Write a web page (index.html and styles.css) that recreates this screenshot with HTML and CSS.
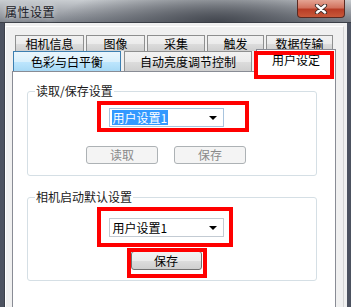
FILE: index.html
```html
<!DOCTYPE html>
<html lang="zh-CN">
<head>
    <meta charset="UTF-8">
    <title>属性设置</title>
    <link rel="stylesheet" href="styles.css">
</head>
<body>
    <div class="window">
        <div class="titlebar">
            <span class="title">属性设置</span>
            <div class="close-btn">
                <svg width="14" height="10" viewBox="0 0 14 10">
                    <path d="M3 1.5 L11 8.5 M11 1.5 L3 8.5" stroke="#3a2a28" stroke-width="4.2" stroke-linecap="round"/>
                    <path d="M3 1.5 L11 8.5 M11 1.5 L3 8.5" stroke="#ffffff" stroke-width="2.4" stroke-linecap="round"/>
                </svg>
            </div>
        </div>

        <div class="frame">
            <div class="client">
                <div class="inner">
                    <div class="tab-row row-top">
                        <div class="tab" style="width: 69px;">相机信息</div>
                        <div class="tab" style="width: 59px;">图像</div>
                        <div class="tab" style="width: 58px;">采集</div>
                        <div class="tab" style="width: 57px;">触发</div>
                        <div class="tab" style="width: 67px;">数据传输</div>
                    </div>
                    <div class="tab-row row-bottom">
                        <div class="tab tab-hover" style="width: 108px;">色彩与白平衡</div>
                        <div class="tab" style="width: 128px;">自动亮度调节控制</div>
                        <div class="tab tab-active" style="width: 80px;">用户设定</div>
                    </div>

                    <div class="panel">
                        <div class="group group-load">
                            <span class="group-label">读取/保存设置</span>
                            <div class="combo combo-focus">
                                <span class="combo-text selected">用户设置1</span>
                                <span class="combo-arrow"></span>
                            </div>
                            <div class="btn-row">
                                <div class="btn btn-disabled">读取</div>
                                <div class="btn btn-disabled">保存</div>
                            </div>
                        </div>

                        <div class="group group-default">
                            <span class="group-label">相机启动默认设置</span>
                            <div class="combo">
                                <span class="combo-text">用户设置1</span>
                                <span class="combo-arrow"></span>
                            </div>
                            <div class="btn btn-save">保存</div>
                        </div>
                    </div>
                </div>
            </div>
        </div>

        <!-- annotation boxes -->
        <div class="mark mark-tab"></div>
        <div class="mark mark-combo1"></div>
        <div class="mark mark-combo2"></div>
        <div class="mark mark-save"></div>
    </div>
</body>
</html>
```

FILE: styles.css
```css
* {
    margin: 0;
    padding: 0;
    box-sizing: border-box;
}

body {
    width: 351px;
    height: 307px;
    overflow: hidden;
    background: #4c5260;
    font-family: "Noto Sans CJK SC", "Noto Sans", sans-serif;
    font-size: 12px;
    color: #000000;
}

.window {
    position: relative;
    width: 351px;
    height: 307px;
}

/* title bar */
.titlebar {
    height: 23px;
    display: flex;
    align-items: flex-start;
    justify-content: space-between;
    background:
        radial-gradient(ellipse 160px 40px at 62% 100%, rgba(60, 64, 72, 0.9), rgba(60, 64, 72, 0) 100%),
        linear-gradient(to bottom, #c9cdd1 0%, #a9adb3 45%, #80858d 100%);
    border-bottom: 1px solid #3a3e46;
}

.title {
    margin: 5px 0 0 5px;
    font-size: 12px;
    line-height: 14px;
    letter-spacing: 0.5px;
    color: #1c1c28;
    text-shadow: 0 0 6px rgba(255, 255, 255, 0.8);
}

.close-btn {
    width: 48px;
    height: 18px;
    margin-right: 6px;
    display: flex;
    align-items: center;
    justify-content: center;
    border: 1px solid #5a2a22;
    border-top: none;
    border-radius: 0 0 4px 4px;
    background: linear-gradient(to bottom, #e4a493 0%, #d2735f 45%, #b83d26 55%, #c8583a 100%);
}

/* frame */
.frame {
    height: 284px;
    padding: 0 4px 0 4px;
    background: #4c5260;
}

.client {
    height: 100%;
    background: #f0f0f0;
    padding-top: 3px;
    border-left: 1px solid #3c404a;
}

.inner {
    height: 100%;
    margin-right: 3px;
    border-top: 1px solid #ffffff;
    border-left: 1px solid #ffffff;
    border-right: 1px solid #d4d4d4;
    padding-top: 8px;
}

/* tabs */
.tab-row {
    display: flex;
}

.row-top {
    gap: 2px;
    padding-left: 9px;
    height: 16px;
}

.row-bottom {
    gap: 3px;
    padding-left: 7px;
    height: 20px;
    align-items: flex-end;
}

.tab {
    height: 100%;
    display: flex;
    align-items: center;
    justify-content: center;
    border: 1px solid #8e8f8f;
    border-bottom: none;
    background: linear-gradient(to bottom, #f2f2f2 0%, #ebebeb 50%, #dddddd 51%, #cfcfcf 100%);
    line-height: 14px;
    white-space: nowrap;
}

.row-top .tab {
    padding-top: 1px;
}

.tab-hover {
    border-color: #3c7fb1;
    background: linear-gradient(to bottom, #eaf6fd 0%, #d9f0fc 50%, #bee6fd 51%, #a7d9f5 100%);
}

.tab-active {
    position: relative;
    z-index: 2;
    height: 23px;
    margin-bottom: -1px;
    margin-left: 1px;
    background: #ffffff;
    border-color: #898c95;
    padding-bottom: 2px;
}

.panel {
    position: relative;
    margin-left: 6px;
    width: 324px;
    height: 240px;
    background: #ffffff;
    border: 1px solid #898c95;
    padding: 19px 0 0 14px;
}

/* group boxes */
.group {
    position: relative;
    width: 290px;
    border: 1px solid #d5dfe5;
    border-radius: 3px;
    display: flex;
    flex-direction: column;
    align-items: center;
    padding-right: 12px;
}

.group-load {
    padding-top: 16px;
    padding-bottom: 11px;
}

.group-default {
    margin-top: 21px;
    padding-top: 20px;
    padding-bottom: 10px;
}

.group-label {
    position: absolute;
    top: -8px;
    left: 7px;
    padding: 0 1px;
    background: #ffffff;
    line-height: 14px;
    color: #1a1a1a;
}

/* combo box */
.combo {
    width: 115px;
    height: 19px;
    display: flex;
    align-items: center;
    justify-content: space-between;
    border: 1px solid #c3cbd3;
    padding: 0 6px 0 2px;
    background: #ffffff;
}

.combo-focus {
    border-color: #a8c4de;
}

.combo-text {
    line-height: 15px;
    padding: 0 1px;
}

.combo-text.selected {
    background: #3399ff;
    color: #ffffff;
}

.combo-arrow {
    width: 0;
    height: 0;
    border-left: 4px solid transparent;
    border-right: 4px solid transparent;
    border-top: 4px solid #000000;
}

/* buttons */
.btn-row {
    display: flex;
    gap: 16px;
    margin-top: 19px;
}

.btn {
    display: flex;
    align-items: center;
    justify-content: center;
    border-radius: 3px;
    line-height: 14px;
}

.btn-disabled {
    width: 72px;
    height: 18px;
    border: 1px solid #adb2b5;
    background: #f4f4f4;
    color: #8a8a8a;
}

.btn-save {
    width: 71px;
    height: 19px;
    margin-top: 14px;
    border: 1px solid #707070;
    background: linear-gradient(to bottom, #f2f2f2 0%, #ebebeb 50%, #dddddd 51%, #cfcfcf 100%);
}

/* red annotation boxes */
.mark {
    position: absolute;
    border: 4px solid #ff0000;
    z-index: 5;
}

.mark-tab {
    left: 254px;
    top: 51px;
    width: 80px;
    height: 28px;
}

.mark-combo1 {
    left: 97px;
    top: 101px;
    width: 152px;
    height: 31px;
}

.mark-combo2 {
    left: 97px;
    top: 207px;
    width: 136px;
    height: 40px;
}

.mark-save {
    left: 127px;
    top: 248px;
    width: 80px;
    height: 30px;
}
```
